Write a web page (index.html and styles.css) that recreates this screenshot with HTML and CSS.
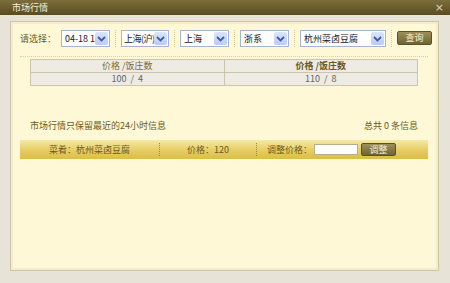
FILE: index.html
```html
<!DOCTYPE html>
<html lang="zh-CN">

<head>
    <meta charset="UTF-8">
    <title>市场行情</title>
    <link rel="stylesheet" href="styles.css">
</head>

<body>
    <div class="window">
        <div class="titlebar">
            <span class="title">市场行情</span>
            <span class="close">×</span>
        </div>
        <div class="frame">
            <!-- 筛选条件 -->
            <div class="filter">
                <span class="label">请选择：</span>
                <div class="select w49"><span class="val">04-18 18:00</span><span class="arrow"><svg width="9" height="6" viewBox="0 0 9 6"><path d="M1 1 L4.5 4.5 L8 1" fill="none" stroke="#3f5d9a" stroke-width="1.8"/></svg></span></div>
                <span class="sep"></span>
                <div class="select w47"><span class="val tight">上海(沪)</span><span class="arrow"><svg width="9" height="6" viewBox="0 0 9 6"><path d="M1 1 L4.5 4.5 L8 1" fill="none" stroke="#3f5d9a" stroke-width="1.8"/></svg></span></div>
                <span class="sep"></span>
                <div class="select w49"><span class="val">上海</span><span class="arrow"><svg width="9" height="6" viewBox="0 0 9 6"><path d="M1 1 L4.5 4.5 L8 1" fill="none" stroke="#3f5d9a" stroke-width="1.8"/></svg></span></div>
                <span class="sep"></span>
                <div class="select w50"><span class="val">浙系</span><span class="arrow"><svg width="9" height="6" viewBox="0 0 9 6"><path d="M1 1 L4.5 4.5 L8 1" fill="none" stroke="#3f5d9a" stroke-width="1.8"/></svg></span></div>
                <span class="sep"></span>
                <div class="select w86"><span class="val">杭州菜卤豆腐</span><span class="arrow"><svg width="9" height="6" viewBox="0 0 9 6"><path d="M1 1 L4.5 4.5 L8 1" fill="none" stroke="#3f5d9a" stroke-width="1.8"/></svg></span></div>
                <span class="sep"></span>
                <button class="btn query">查询</button>
            </div>
            <div class="dash"></div>

            <table class="prices">
                <tr>
                    <th>价格 /饭庄数</th>
                    <th class="strong">价格 /饭庄数</th>
                </tr>
                <tr>
                    <td>100&nbsp; / &nbsp;4</td>
                    <td>110&nbsp; / &nbsp;8</td>
                </tr>
            </table>

            <div class="note">
                <span>市场行情只保留最近的24小时信息</span>
                <span>总共 0 条信息</span>
            </div>

            <div class="goldbar">
                <div class="cell dish">菜肴：杭州菜卤豆腐</div>
                <div class="cell price">价格：120</div>
                <div class="cell adjust">
                    <span>调整价格：</span>
                    <input class="input" type="text">
                    <button class="btn adjust-btn">调整</button>
                </div>
            </div>
        </div>
    </div>
</body>

</html>
```

FILE: styles.css
```css
body {
    margin: 0;
    font-family: "Noto Sans CJK SC", "DejaVu Sans", sans-serif;
    font-size: 9px;
    color: #6b5a22;
}

.window {
    width: 450px;
    height: 283px;
    background-color: #e7e3d6;
    display: flex;
    flex-direction: column;
    overflow: hidden;
}

.titlebar {
    height: 15px;
    display: flex;
    align-items: center;
    justify-content: space-between;
    padding: 0 6px 0 12px;
    background: linear-gradient(#7c6d3b, #5a4c20);
    color: #f4efdc;
    font-size: 9px;
}

.close {
    color: #d8d2c0;
    font-family: "DejaVu Sans", sans-serif;
    font-size: 11px;
}

.frame {
    flex: 1;
    margin: 6px 11px 12px 10px;
    border: 1px solid #cfc6a6;
    background-color: #fff8d6;
    box-shadow: inset 0 0 0 2px #f3ecd0;
}

.filter {
    display: flex;
    align-items: center;
    gap: 5px;
    margin: 8px 0 0 9px;
    height: 17px;
}

.label {
    width: 36px;
    white-space: nowrap;
    font-size: 9px;
    color: #6b5a22;
}

.select {
    height: 15px;
    display: flex;
    align-items: center;
    background-color: #fff;
    border: 1px solid #a5b5cf;
    color: #222;
    overflow: hidden;
}

.w47 { width: 46px; }
.w49 { width: 47px; }
.w50 { width: 47px; }
.w86 { width: 84px; }

.val {
    flex: 1;
    padding-left: 3px;
    white-space: nowrap;
    overflow: hidden;
    font-size: 9px;
}

.val.tight {
    padding-left: 2px;
    letter-spacing: -0.5px;
}

.arrow {
    width: 13px;
    height: 13px;
    margin-right: 1px;
    display: flex;
    align-items: center;
    justify-content: center;
    background: linear-gradient(#dbe6fc, #b7cbf5);
    border-radius: 2px;
}

.sep {
    width: 0;
    height: 17px;
    border-left: 1px dotted #d8cb8c;
}

.btn {
    font-family: inherit;
    font-size: 9px;
    padding: 0;
    cursor: pointer;
    color: #f4eed6;
    background: linear-gradient(#9c8f5a, #6f6434);
    border: 1px solid #5c5228;
    border-radius: 2px;
}

.query {
    width: 35px;
    height: 14px;
    line-height: 12px;
    margin-top: -2px;
}

.dash {
    margin: 9px 10px 0 9px;
    border-top: 1px dotted #ddd19a;
}

.prices {
    margin: 2px 20px 0 19px;
    width: 388px;
    border-collapse: collapse;
    font-size: 9px;
}

.prices th,
.prices td {
    width: 50%;
    height: 12px;
    padding: 0;
    line-height: 12px;
    text-align: center;
    border: 1px solid #cbc5b0;
    background-color: #edebe4;
}

.prices th {
    font-weight: normal;
    color: #7a6a35;
}

.prices th.strong {
    font-weight: bold;
    color: #6b5a1e;
}

.prices td {
    color: #666;
}

.note {
    display: flex;
    justify-content: space-between;
    margin: 33px 20px 0 19px;
    height: 13px;
    line-height: 13px;
}

.goldbar {
    display: flex;
    align-items: center;
    height: 19px;
    margin: 8px 10px 0 9px;
    background: linear-gradient(#f6e9a6, #e6cc62 55%, #dcbd45);
    color: #6b5a1e;
}

.cell {
    height: 13px;
    line-height: 13px;
    display: flex;
    align-items: center;
}

.dish {
    width: 139px;
    justify-content: center;
    border-right: 1px dotted #a08a38;
}

.price {
    width: 96px;
    justify-content: center;
    border-right: 1px dotted #a08a38;
}

.adjust {
    padding-left: 10px;
}

.input {
    width: 42px;
    height: 9px;
    margin: 0 3px 0 2px;
    padding: 0;
    border: 1px solid #b8ae88;
    background-color: #fff;
}

.adjust-btn {
    width: 35px;
    height: 13px;
    line-height: 11px;
}
```
